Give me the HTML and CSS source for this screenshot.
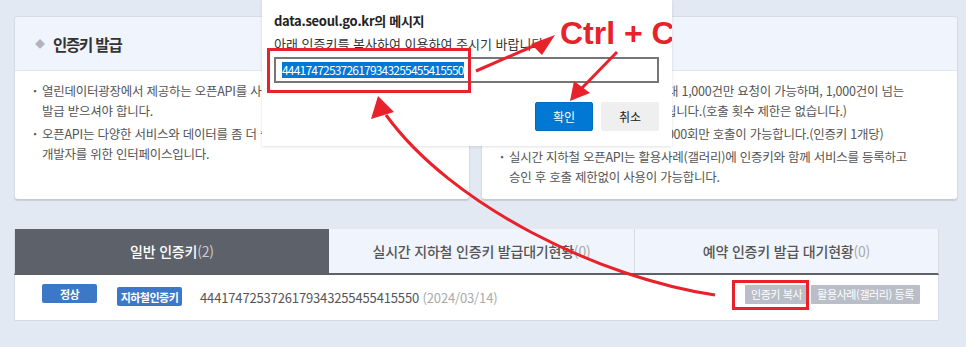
FILE: index.html
```html
<!DOCTYPE html>
<html lang="ko">
<head>
<meta charset="utf-8">
<title>인증키 발급</title>
<link rel="stylesheet" href="styles.css">
</head>
<body>

<div id="content">

  <div class="cards">
    <div class="card card-left">
      <div class="card-head"><span class="dia">◆</span>인증키 발급</div>
      <ul class="card-list">
        <li>열린데이터광장에서 제공하는 오픈API를 사용하기 위해서는 인증키를<br>발급 받으셔야 합니다.</li>
        <li>오픈API는 다양한 서비스와 데이터를 좀 더 쉽게 이용할 수 있도록 공개된<br>개발자를 위한 인터페이스입니다.</li>
      </ul>
    </div>
    <div class="card card-right">
      <div class="card-head"></div>
      <ul class="card-list">
        <li>일반 인증키는 1회 호출 시에 최대 1,000건만 요청이 가능하며, 1,000건이 넘는<br>경우에는 나누어서 호출하셔야 됩니다.(호출 횟수 제한은 없습니다.)</li>
        <li>실시간 지하철 인증키는 하루 1,000회만 호출이 가능합니다.(인증키 1개당)</li>
        <li>실시간 지하철 오픈API는 활용사례(갤러리)에 인증키와 함께 서비스를 등록하고<br>승인 후 호출 제한없이 사용이 가능합니다.</li>
      </ul>
    </div>
  </div>

  <div class="keys">
    <div class="tabs">
      <div class="tab on">일반 인증키<span class="cnt">(2)</span></div>
      <div class="tab">실시간 지하철 인증키 발급대기현황<span class="cnt">(0)</span></div>
      <div class="tab">예약 인증키 발급 대기현황<span class="cnt">(0)</span></div>
    </div>
    <div class="key-row">
      <span class="badge state">정상</span>
      <span class="badge kind">지하철인증키</span>
      <span class="key">4441747253726179343255455415550 <span class="date">(2024/03/14)</span></span>
      <span class="btns">
        <span class="gbtn">인증키 복사</span>
        <span class="gbtn">활용사례(갤러리) 등록</span>
      </span>
    </div>
  </div>

</div>

<div class="dialog">
  <div class="dlg-title">data.seoul.go.kr의 메시지</div>
  <div class="dlg-text">아래 인증키를 복사하여 이용하여 주시기 바랍니다.</div>
  <div class="dlg-input"><span class="sel">4441747253726179343255455415550</span></div>
  <div class="dlg-btns">
    <span class="dbtn ok">확인</span>
    <span class="dbtn">취소</span>
  </div>
  <div class="hint">Ctrl + C</div>
</div>

<svg class="marks" width="966" height="347" viewBox="0 0 966 347">
  <g fill="none" stroke="#e8212b" stroke-width="3">
    <rect x="268.5" y="49.5" width="201" height="42"/>
    <rect x="733.5" y="281.5" width="74" height="27"/>
    <line x1="476" y1="71" x2="538" y2="44"/>
    <line x1="617" y1="52" x2="582" y2="88"/>
    <path d="M715 295 C600 278 452 206 386 115"/>
  </g>
  <g fill="#e8212b">
    <polygon points="555,35 531,44 542,55"/>
    <polygon points="570,101 574,81 590,93"/>
    <polygon points="378,96 371,119 394,112"/>
  </g>
</svg>

</body>
</html>
```

FILE: styles.css
```css
body {margin:0; background-color:#e3e9f2; font-family:"Noto Sans CJK KR", "Noto Sans", sans-serif; color:#555;}
#content {padding:16px 8px 0 14px;}

.cards {display:flex; gap:11px;}
.card {background:#fff; border:1px solid #d6dce6; border-bottom-color:#c4cbd6; border-radius:4px; height:182px; overflow:hidden; box-shadow:0 1px 1px #c8cfda;}
.card-left {width:454px;}
.card-right {width:475px;}
.card-head {height:53px; background:#f0f4fc; border-bottom:1px solid #e0e5ee; display:flex; align-items:center; padding-left:20px; font-size:15.5px; font-weight:bold; color:#333; letter-spacing:-1.2px;}
.dia {font-size:10px; color:#b0b4bc; margin-right:8px; letter-spacing:0;}
.card-list {list-style:none; margin:0; padding:10px 0 0 18px; font-size:12.5px; line-height:20px; letter-spacing:-0.25px; white-space:nowrap;}
.card-list li {position:relative; padding-left:9px; margin-bottom:3px;}
.card-list li:before {content:"·"; position:absolute; left:0; top:0; font-weight:bold;}

.keys {margin-top:29px; width:925px;}
.tabs {display:grid; grid-template-columns:314px 305px 1fr; background:#f0f4fc; border:1px solid #d6dce6; border-bottom:2px solid #5d6169; border-top:0;}
.tab {height:44px; display:flex; align-items:center; justify-content:center; font-size:14px; font-weight:500; color:#555; border-left:1px solid #d6dce6; letter-spacing:-0.2px;}
.tab.on {background:#5d6169; color:#fff; border-left:0;}
.tab:first-child + .tab {border-left:0;}
.cnt {color:#aaa; font-weight:normal;}
.tab.on .cnt {color:#c8ccd2;}

.key-row {height:45px; background:#fff; border:1px solid #d6dce6; border-top:0; display:flex; align-items:center; padding:0 18px 0 27px;}
.badge {display:inline-flex; align-items:center; justify-content:center; height:19px; background:#3d78c8; color:#fff; font-size:11px; font-weight:bold; border-radius:2px; letter-spacing:-0.5px;}
.state {width:55px; margin-top:-8px;}
.kind {width:65px; margin-left:20px; margin-top:-2px;}
.key {margin-left:18px; font-size:13px; letter-spacing:-0.15px; color:#555;}
.date {color:#aaa;}
.btns {margin-left:auto; display:flex; gap:3px; margin-top:-7px;}
.gbtn {display:inline-flex; align-items:center; height:19px; padding:0 6px; background:#b9bec8; color:#fff; font-size:11px; letter-spacing:-0.4px; border-radius:1px;}

.dialog {position:absolute; left:262px; top:0; width:410px; height:146px; background:#fff; overflow:hidden; box-shadow:0 1px 3px rgba(0,0,0,0.12); padding:0 13px 0 12px; box-sizing:border-box;}
.dlg-title {font-size:13px; font-weight:bold; color:#222; margin-top:11px; letter-spacing:-0.3px;}
.dlg-text {font-size:13px; color:#333; margin-top:4px; letter-spacing:0;}
.dlg-input {margin-top:4px; height:26px; border:2px solid #767676; box-sizing:border-box; display:flex; align-items:center; padding-left:6px;}
.sel {background:#0078d7; color:#fff; font-size:12px; line-height:16px; letter-spacing:-0.8px;}
.dlg-btns {display:flex; justify-content:flex-end; gap:8px; margin-top:19px;}
.dbtn {width:58px; height:29px; display:flex; align-items:center; justify-content:center; background:#efefef; color:#222; font-size:12px; border-radius:2px;}
.dbtn.ok {background:#0078d4; color:#fff; border:1px solid #006cc0; box-sizing:border-box;}
.hint {position:absolute; left:298px; top:15px; font-family:"Liberation Sans", Arial, sans-serif; font-weight:bold; font-size:32px; color:#e8212b; white-space:nowrap;}

.marks {position:absolute; left:0; top:0; pointer-events:none;}
```
